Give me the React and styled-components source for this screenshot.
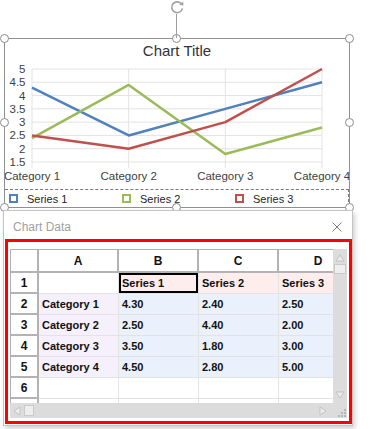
import React from "react";
import styled, { createGlobalStyle } from "styled-components";

const GlobalStyle = createGlobalStyle`
  html, body { margin: 0; padding: 0; }
  body {
    width: 392px;
    height: 429px;
    overflow: hidden;
    background: #fff;
    font-family: "Liberation Sans", Arial, sans-serif;
  }
`;

const series = [
  { name: "Series 1", color: "#4f81bd", values: [4.3, 2.5, 3.5, 4.5] },
  { name: "Series 2", color: "#9bbb59", values: [2.4, 4.4, 1.8, 2.8] },
  { name: "Series 3", color: "#c0504d", values: [2.5, 2.0, 3.0, 5.0] },
];
const categories = ["Category 1", "Category 2", "Category 3", "Category 4"];
const ticks = [5, 4.5, 4, 3.5, 3, 2.5, 2, 1.5];
const xs = [27, 123.7, 220.3, 317];
const yOf = (v) => 6 + (5 - v) * 26.57;

const rows = [
  ["", "Series 1", "Series 2", "Series 3"],
  ["Category 1", "4.30", "2.40", "2.50"],
  ["Category 2", "2.50", "4.40", "2.00"],
  ["Category 3", "3.50", "1.80", "3.00"],
  ["Category 4", "4.50", "2.80", "5.00"],
  ["", "", "", ""],
  ["", "", "", ""],
];
const letters = ["A", "B", "C", "D"];

const cellBg = (r, c) => {
  if (r === 0 && c >= 1) return "#fdeded";
  if (r >= 1 && r <= 4 && c === 0) return "#f5f0fb";
  if (r >= 1 && r <= 4) return "#eaf1fc";
  return "#fff";
};

const Page = styled.div`
  padding: 38px 0 0 4px;
`;

const ChartFrame = styled.div`
  position: relative;
  width: 346px;
  height: 170px;
  box-sizing: border-box;
  border: 1px solid #8f8f8f;
  display: flex;
  flex-direction: column;
`;

const Title = styled.div`
  height: 24px;
  line-height: 24px;
  text-align: center;
  font-size: 15px;
  color: #333;
`;

const Plot = styled.svg`
  display: block;
  width: 344px;
  height: 126px;
`;

const Legend = styled.div`
  display: flex;
  align-items: center;
  height: 18px;
  box-sizing: border-box;
  border-top: 1px dashed #777;
  border-right: 1px dashed #777;
  padding-left: 4px;
`;

const LegendItem = styled.div`
  width: 115.5px;
  display: flex;
  align-items: center;
  gap: 9px;
  font-size: 11px;
  color: #262626;
`;

const Swatch = styled.span`
  width: 9px;
  height: 9px;
  box-sizing: border-box;
  border: 2px solid ${(p) => p.$color};
  background: #fff;
`;

const Handle = styled.span`
  position: absolute;
  left: ${(p) => p.$x}px;
  top: ${(p) => p.$y}px;
  width: 9px;
  height: 9px;
  box-sizing: border-box;
  border-radius: 50%;
  border: 1px solid #8c8c8c;
  background: #fff;
`;

const RotateStem = styled.span`
  position: absolute;
  left: 171px;
  top: -25px;
  width: 1px;
  height: 24px;
  background: #a0a0a0;
`;

const RotateIcon = styled.svg`
  position: absolute;
  left: 164px;
  top: -39px;
  width: 16px;
  height: 15px;
`;

const DataWindow = styled.div`
  position: relative;
  z-index: 2;
  margin: 2px 0 0 -1px;
  width: 350px;
  box-sizing: border-box;
  border: 1px solid #c4c4c4;
  background: #fff;
  padding-bottom: 1px;
  box-shadow: 2px 3px 5px rgba(0, 0, 0, 0.18);
`;

const TitleBar = styled.div`
  height: 28px;
  box-sizing: border-box;
  padding: 4px 10px 0 9px;
  display: flex;
  align-items: center;
  justify-content: space-between;
  font-size: 12px;
  color: #a0a0a0;
`;

const CloseIcon = styled.svg`
  width: 10px;
  height: 10px;
`;

const Highlight = styled.div`
  margin-left: 1px;
  width: 347px;
  box-sizing: border-box;
  border: 3px solid #ff0000;
  padding: 7px 2px 3px 2px;
`;

const Sheet = styled.div`
  display: grid;
  grid-template-columns: 323px 14px;
  grid-template-rows: 154px 15px;
`;

const Viewport = styled.div`
  overflow: hidden;
  box-sizing: border-box;
  border-top: 1px solid #b0b0b0;
  border-left: 1px solid #b0b0b0;
`;

const Grid = styled.div`
  display: grid;
  grid-template-columns: 28px 80px 80px 80px 80px;
  grid-template-rows: 23px repeat(7, 21px);
  width: 348px;
`;

const Cell = styled.div`
  box-sizing: border-box;
  display: flex;
  align-items: center;
  justify-content: ${(p) => (p.$head ? "center" : "flex-start")};
  padding-left: ${(p) => (p.$head ? 0 : 3)}px;
  background: ${(p) => p.$bg || "#fff"};
  border-right: ${(p) => (p.$head ? "2px solid #b3b3b3" : "1px solid #e3e3e3")};
  border-bottom: ${(p) => (p.$head ? "2px solid #b3b3b3" : "1px solid #e3e3e3")};
  box-shadow: ${(p) => (p.$selected ? "inset 0 0 0 2px #000" : "none")};
  font-size: ${(p) => (p.$head ? 12 : 11)}px;
  font-weight: bold;
  color: #111;
  white-space: nowrap;
  overflow: hidden;
`;

const VScroll = styled.div`
  background: #dcdcdc;
  display: flex;
  flex-direction: column;
  align-items: center;
  padding: 4px 0 3px;
  box-sizing: border-box;
`;

const HScroll = styled.div`
  background: #dcdcdc;
  display: flex;
  align-items: center;
  padding: 0 6px 0 3px;
  box-sizing: border-box;
`;

const Thumb = styled.span`
  display: block;
  width: ${(p) => p.$w}px;
  height: ${(p) => p.$h}px;
  margin: ${(p) => p.$m};
  box-sizing: border-box;
  background: #eeeeee;
  border: 1px solid #cacaca;
`;

const Spacer = styled.span`
  flex: 1;
`;

const Corner = styled.div`
  background: #dcdcdc;
  display: flex;
  align-items: flex-end;
  justify-content: flex-end;
`;

const Arrow = ({ dir }) => {
  const pts = {
    up: "1,8 5,2 9,8",
    down: "1,1 5,7 9,1",
    left: "7,1 1,5 7,9",
    right: "1,1 7,5 1,9",
  }[dir];
  const vertical = dir === "up" || dir === "down";
  return (
    <svg width={vertical ? 10 : 8} height={vertical ? 9 : 10}>
      <polygon points={pts} fill="#ededed" stroke="#c3c3c3" strokeWidth="1" />
    </svg>
  );
};

const handles = [
  [-5, -5], [167, -5], [340, -5],
  [-5, 79], [340, 79],
  [-5, 164], [167, 164], [340, 164],
];

export default function App() {
  return (
    <Page>
      <GlobalStyle />
      <ChartFrame>
        <Title>Chart Title</Title>
        <Plot viewBox="0 0 344 126">
          {ticks.map((t) => (
            <line key={"h" + t} x1={27} x2={317} y1={yOf(t)} y2={yOf(t)} stroke="#e3e3e3" strokeWidth="1" />
          ))}
          {xs.map((x) => (
            <line key={"v" + x} x1={x} x2={x} y1={yOf(5)} y2={105} stroke="#e3e3e3" strokeWidth="1" />
          ))}
          {ticks.map((t) => (
            <text key={"t" + t} x={20.5} y={yOf(t) + 4} textAnchor="end" fontSize="11.5" fill="#404040" fontFamily="Liberation Sans, Arial, sans-serif">
              {t}
            </text>
          ))}
          {categories.map((c, i) => (
            <text key={c} x={xs[i]} y={117} textAnchor="middle" fontSize="11.5" fill="#404040" fontFamily="Liberation Sans, Arial, sans-serif">
              {c}
            </text>
          ))}
          {series.map((s) => (
            <polyline
              key={s.name}
              points={s.values.map((v, i) => `${xs[i]},${yOf(v)}`).join(" ")}
              fill="none"
              stroke={s.color}
              strokeWidth="2.5"
              strokeLinejoin="round"
            />
          ))}
        </Plot>
        <Legend>
          {series.map((s) => (
            <LegendItem key={s.name}>
              <Swatch $color={s.color} />
              {s.name}
            </LegendItem>
          ))}
        </Legend>
        {handles.map(([x, y], i) => (
          <Handle key={i} $x={x} $y={y} />
        ))}
        <RotateStem />
        <RotateIcon viewBox="0 0 16 15">
          <path d="M12.6 4.2 A5.4 5.4 0 1 0 13.4 8.4" fill="none" stroke="#a3a3a3" strokeWidth="1.6" />
          <polygon points="10.2,4.6 14.2,1.4 14.4,5.8" fill="#a3a3a3" />
        </RotateIcon>
      </ChartFrame>

      <DataWindow>
        <TitleBar>
          <span>Chart Data</span>
          <CloseIcon viewBox="0 0 10 10">
            <path d="M0.5 0.5 L9.5 9.5 M9.5 0.5 L0.5 9.5" stroke="#7a7a7a" strokeWidth="1" />
          </CloseIcon>
        </TitleBar>
        <Highlight>
          <Sheet>
            <Viewport>
              <Grid>
                <Cell $head />
                {letters.map((l) => (
                  <Cell key={l} $head>{l}</Cell>
                ))}
                {rows.map((row, r) => (
                  <React.Fragment key={r}>
                    <Cell $head>{r < 6 ? r + 1 : ""}</Cell>
                    {row.map((v, c) => (
                      <Cell key={c} $bg={cellBg(r, c)} $selected={r === 0 && c === 1}>
                        {v}
                      </Cell>
                    ))}
                  </React.Fragment>
                ))}
              </Grid>
            </Viewport>
            <VScroll>
              <Arrow dir="up" />
              <Thumb $w={12} $h={10} $m="2px 0 0" />
              <Spacer />
              <Arrow dir="down" />
            </VScroll>
            <HScroll>
              <Arrow dir="left" />
              <Thumb $w={10} $h={11} $m="0 0 0 3px" />
              <Spacer />
              <Arrow dir="right" />
            </HScroll>
            <Corner>
              <svg width="10" height="10">
                {[[7, 1], [7, 4], [4, 4], [7, 7], [4, 7], [1, 7]].map(([x, y], i) => (
                  <rect key={i} x={x} y={y} width="2" height="2" fill="#b5b5b5" />
                ))}
              </svg>
            </Corner>
          </Sheet>
        </Highlight>
      </DataWindow>
    </Page>
  );
}
